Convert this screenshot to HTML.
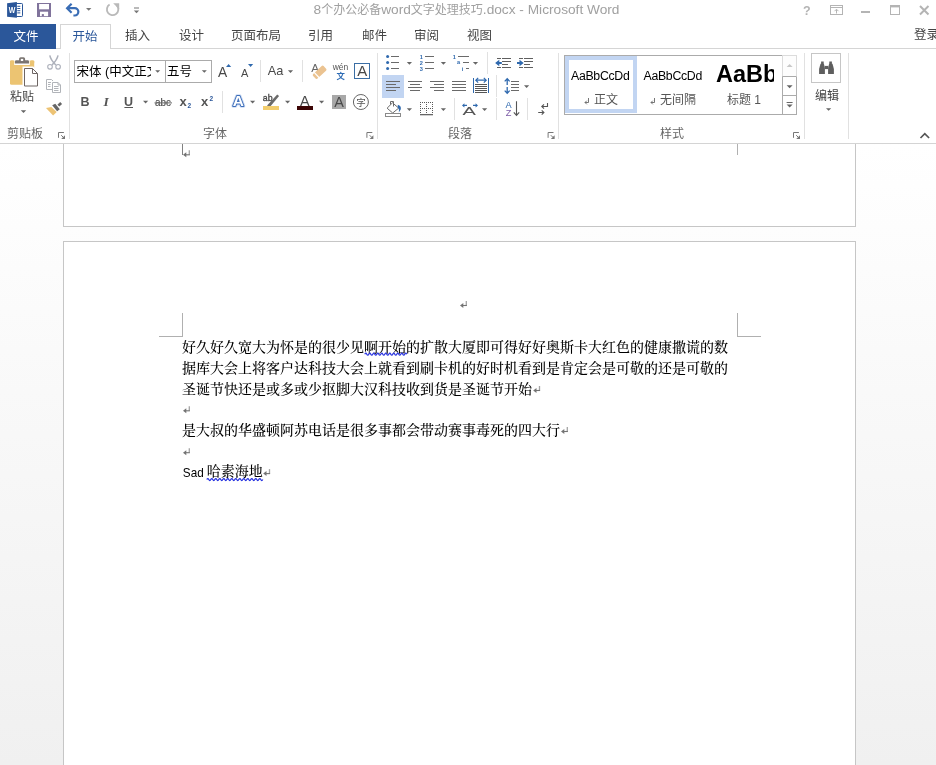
<!DOCTYPE html>
<html lang="zh-CN">
<head>
<meta charset="utf-8">
<title>8个办公必备word文字处理技巧.docx - Microsoft Word</title>
<style>
*{box-sizing:border-box;margin:0;padding:0}
html,body{width:936px;height:765px;overflow:hidden;background:#fff}
body{position:relative;font-family:"Liberation Sans","Noto Sans CJK SC",sans-serif;font-size:12px;color:#444}
#wrap{position:absolute;left:0;top:0;width:936px;height:765px;overflow:hidden;will-change:transform}
.abs{position:absolute}
#titlebar{position:absolute;left:0;top:0;width:936px;height:24px;background:#fff}
#title{position:absolute;left:313.500px;top:1px;text-align:left;font-size:12px;color:#a0a0a0;line-height:18px;white-space:nowrap}
.tl{font-size:13.700px}
#tabs{position:absolute;left:0;top:24px;width:936px;height:25px}
#tabline{position:absolute;left:0;top:48px;width:936px;height:1px;background:#d5d5d5}
#filetab{position:absolute;left:0;top:24px;width:56px;height:25px;background:#2b579a;color:#fff;text-align:left;padding-left:13.5px;padding-top:1.5px;line-height:23px;font-size:12.5px}
#hometab{position:absolute;left:60px;top:24px;width:51px;height:25px;background:#fff;border:1px solid #d5d5d5;border-bottom:none;color:#2b579a;text-align:left;padding-left:11.5px;padding-top:1.5px;line-height:21px;font-size:12.5px}
.tab{position:absolute;top:25px;height:24px;line-height:23px;font-size:12.5px;color:#444;white-space:nowrap}
#ribbon{position:absolute;left:0;top:49px;width:936px;height:94px;background:#fff}
#ribline{position:absolute;left:0;top:143px;width:936px;height:1px;background:#d4d4d4}
.sep{position:absolute;top:53px;width:1px;height:86px;background:#e1e1e1}
.glabel{position:absolute;top:125.500px;font-size:12px;color:#666;line-height:16px;white-space:nowrap}
#doc{overflow:hidden;position:absolute;left:0;top:144px;width:936px;height:621px;background:linear-gradient(#ffffff,#f0f0f0)}
.page{position:absolute;background:#fff;border:1px solid #c6c6c6}
.dtext{position:absolute;font-family:"Liberation Serif","Noto Serif CJK SC",serif;font-weight:500;font-size:14px;color:#000;line-height:20px;white-space:nowrap}
.lat{font-weight:400;display:inline-block;position:relative;top:0.800px;font-family:"Liberation Sans",sans-serif;font-size:13.300px;width:24.800px;transform:scaleX(0.880);transform-origin:7px 50%}
.pm{color:#777;font-family:"DejaVu Sans",sans-serif;font-size:9px}
.mk{position:absolute;background:#b0b0b0}
</style>
</head>
<body>
<div id="wrap">
<div id="titlebar">
  <div id="title"><span class="tl">8</span>个办公必备<span class="tl">word</span>文字处理技巧<span class="tl">.docx - Microsoft Word</span></div>
</div>
<div id="tabline"></div>
<div id="filetab">文件</div>
<div id="hometab">开始</div>
<div class="tab" style="left:125px">插入</div>
<div class="tab" style="left:179px">设计</div>
<div class="tab" style="left:231px">页面布局</div>
<div class="tab" style="left:308px">引用</div>
<div class="tab" style="left:362px">邮件</div>
<div class="tab" style="left:414px">审阅</div>
<div class="tab" style="left:467px">视图</div>
<div class="tab" style="left:914px;top:23.500px">登录</div>

<div id="ribbon"></div>
<div class="sep" style="left:69px"></div>
<div class="sep" style="left:377px"></div>
<div class="sep" style="left:558px"></div>
<div class="sep" style="left:804px"></div>
<div class="sep" style="left:848px"></div>
<div class="glabel" style="left:7px">剪贴板</div>
<div class="glabel" style="left:203px">字体</div>
<div class="glabel" style="left:448px">段落</div>
<div class="glabel" style="left:660px">样式</div>
<div class="abs" style="left:9px;top:89px;width:26px;text-align:center;font-size:12px;line-height:16px;color:#444;white-space:nowrap">粘贴</div>
<div class="abs" style="left:76.500px;top:63.300px;width:74.500px;height:18px;overflow:hidden;font-size:12.500px;line-height:19px;color:#000;white-space:nowrap">宋体 (中文正文)</div>
<div class="abs" style="left:167px;top:63.300px;font-size:12.500px;line-height:19px;color:#000;white-space:nowrap">五号</div>
<div class="abs sty" style="left:571px;top:67px;font-size:12.300px;color:#000;line-height:18px;white-space:nowrap;letter-spacing:-0.300px">AaBbCcDd</div>
<div class="abs sty" style="left:643.500px;top:67px;font-size:12.300px;color:#000;line-height:18px;white-space:nowrap;letter-spacing:-0.300px">AaBbCcDd</div>
<div class="abs" style="left:716px;top:57.200px;width:58px;height:34px;overflow:hidden;font-size:23.500px;font-weight:bold;color:#000;line-height:34px;white-space:nowrap">AaBb</div>
<div class="abs" style="left:594px;top:92px;font-size:12px;color:#555;line-height:17px;white-space:nowrap">正文</div>
<div class="abs" style="left:660px;top:92px;font-size:12px;color:#555;line-height:17px;white-space:nowrap">无间隔</div>
<div class="abs" style="left:727px;top:92px;font-size:12px;color:#555;line-height:17px;white-space:nowrap">标题 1</div>
<div class="abs" style="left:815px;top:88px;font-size:12px;color:#444;line-height:17px;white-space:nowrap">编辑</div>
<div id="ribline"></div>
<svg id="ico" class="abs" style="left:0;top:0" width="936" height="144" viewBox="0 0 936 144">
<g id="t-icons">
<!-- word logo -->
<rect x="15.500" y="3.500" width="7" height="13" rx="0.800" fill="#fff" stroke="#2a5699" stroke-width="1"/>
<path d="M17.300 6.300h3M17.300 8.500h3M17.300 10.700h3M17.300 12.900h3" stroke="#2a5699" stroke-width="1"/>
<path d="M7.100 3.300L16.900 2.100v15.700L7.100 16.800z" fill="#2a5699"/>
<text x="8.800" y="12.900" font-family="Liberation Sans,sans-serif" font-weight="bold" font-size="8.600" fill="#fff" textLength="6.600" lengthAdjust="spacingAndGlyphs">W</text>
<!-- save -->
<rect x="37" y="3" width="14" height="14" fill="#80739b"/>
<rect x="39.100" y="4" width="9.900" height="5.300" fill="#fff"/>
<rect x="40" y="11.700" width="8.100" height="4.500" fill="#fff"/>
<rect x="41.800" y="14.100" width="2.100" height="2.100" fill="#80739b"/>
<!-- undo -->
<path d="M71.600 3.700l-4.500 4.500 4.500 4.500" fill="none" stroke="#3a6db5" stroke-width="2.200"/>
<path d="M67.500 8.200h7.200a3.650 3.650 0 0 1 0 7.300h-1.300" fill="none" stroke="#3a6db5" stroke-width="2.200"/>
<path d="M86 8h5.4l-2.7 2.8z" fill="#777"/>
<!-- redo (disabled) -->
<path d="M109.6 4.6a5.700 5.700 0 1 0 7.400 1.200" fill="none" stroke="#b9b9b9" stroke-width="1.8"/>
<path d="M113.200 3.300h6v6z" fill="#b9b9b9"/>
<!-- customize qat -->
<rect x="134" y="7.5" width="5" height="1" fill="#777"/>
<path d="M133.8 10.4h5.4l-2.7 2.9z" fill="#777"/>
<!-- window buttons -->
<text x="803" y="15" font-family="Liberation Sans,sans-serif" font-weight="bold" font-size="12.5" fill="#b4b4b4">?</text>
<rect x="830.5" y="5.5" width="12" height="9" fill="none" stroke="#b4b4b4"/>
<path d="M831 7.5h11" stroke="#b4b4b4"/>
<path d="M836.5 13.5v-4M834.5 11.2l2-2 2 2" fill="none" stroke="#b4b4b4"/>
<rect x="861" y="11" width="9" height="2" fill="#b4b4b4"/>
<rect x="890.5" y="5.5" width="9" height="9" fill="none" stroke="#b4b4b4"/>
<rect x="890" y="5" width="10" height="2.4" fill="#b4b4b4"/>
<path d="M920 6l8.5 8.5M928.5 6L920 14.5" stroke="#b4b4b4" stroke-width="2"/>
<!-- collapse ribbon -->
<path d="M920.5 138l4.3-4.3 4.3 4.3" fill="none" stroke="#555" stroke-width="1.7"/>
</g>
<g id="g-clip">
<!-- paste -->
<rect x="10" y="60" width="24.200" height="24.800" rx="1.600" fill="#ecc472"/>
<rect x="14.200" y="59" width="15.600" height="6" fill="#fff"/>
<rect x="10" y="59" width="4.500" height="2" fill="#fff"/><rect x="29.700" y="59" width="4.500" height="2" fill="#fff"/>
<rect x="10" y="60.200" width="4.300" height="4" rx="1.400" fill="#ecc472"/><rect x="29.900" y="60.200" width="4.300" height="4" rx="1.400" fill="#ecc472"/>
<path d="M15 63.600v-2.200a1.200 1.200 0 0 1 1.200-1.200h2.900v-1.400a1.600 1.600 0 0 1 1.600-1.600h2.800a1.600 1.600 0 0 1 1.600 1.600v1.400h2.700a1.200 1.200 0 0 1 1.200 1.200v2.200z" fill="#7b7572"/>
<rect x="20.800" y="58.900" width="2.400" height="2.100" fill="#fff"/>
<path d="M22.500 66.400h10.800l6.200 6.200v15.400h-17z" fill="#fff"/>
<path d="M24.500 68.500h8l5 5v12.500h-13z" fill="#fff" stroke="#6e6664" stroke-width="1"/>
<path d="M32.500 68.500v5h5" fill="none" stroke="#6e6664" stroke-width="1"/>
<path d="M20.8 110.2h5.4l-2.7 2.8z" fill="#666"/>
<!-- cut (disabled) -->
<path d="M49.800 55.400c0.600 3.400 2.600 6.200 6 9.600M58 55.400c-0.600 3.400-2.600 6.200-6 9.600" stroke="#adb1bb" stroke-width="1.500" fill="none"/>
<circle cx="50" cy="66.800" r="2.300" fill="#fff" stroke="#adb1bb" stroke-width="1.100"/>
<circle cx="58.100" cy="66.800" r="2.300" fill="#fff" stroke="#adb1bb" stroke-width="1.100"/>
<!-- copy (disabled) -->
<path d="M52.500 89.500h-6v-10h5l1.500 1.500" fill="none" stroke="#b1b4b9" stroke-width="1"/>
<path d="M48 82.500h3M48 84.500h2.500M48 86.500h2.500" stroke="#b1b4b9" stroke-width="1"/>
<path d="M52.500 82.500h5.500l2.500 2.500v7.500h-8z" fill="#fff" stroke="#b1b4b9" stroke-width="1"/>
<path d="M58 82.500v2.500h2.500" fill="none" stroke="#b1b4b9" stroke-width="1"/>
<path d="M54 86.500h4.500M54 88.500h4.500M54 90.500h4.500" stroke="#b1b4b9" stroke-width="1"/>
<!-- format painter -->
<path d="M46 108l5.300-1 5.400 5-3.600 3.600z" fill="#edc374"/>
<path d="M52.200 105.300l3.100-1.600 4.500 5.600-2.700 1.900z" fill="#666"/>
<path d="M57.400 104.800l2.800-2.800 1.900 2-2.800 2.600z" fill="#666"/>
<!-- launcher -->
<g transform="translate(58 132)"><path d="M0.500 5.800V0.500H5.900" fill="none" stroke="#777" stroke-width="1"/><path d="M3.200 3.200L5.200 5.200" stroke="#777" stroke-width="1"/><path d="M7 3.200V6.900H3.200z" fill="#777"/></g>
</g>
<g id="g-font">
<!-- combo boxes -->
<rect x="74.500" y="60.500" width="91" height="22" fill="none" stroke="#ababab"/>
<rect x="165.500" y="60.500" width="46" height="22" fill="none" stroke="#ababab"/>
<path d="M155.200 70.200h5l-2.500 2.600z" fill="#666"/>
<path d="M201.800 70.200h5l-2.500 2.600z" fill="#666"/>
<!-- grow/shrink -->
<text x="218" y="76.700" font-family="Liberation Sans,sans-serif" font-size="13.800" fill="#484848">A</text>
<path d="M226 66.900h5.200l-2.600-2.900z" fill="#2f69ae"/>
<text x="240.900" y="76.700" font-family="Liberation Sans,sans-serif" font-size="11" fill="#484848">A</text>
<path d="M248 64.100h5.200l-2.600 2.900z" fill="#2f69ae"/>
<rect x="260" y="60" width="1" height="22" fill="#e1e1e1"/>
<text x="267.800" y="74.800" font-family="Liberation Sans,sans-serif" font-size="12.400" fill="#484848" textLength="15.600" lengthAdjust="spacingAndGlyphs">Aa</text>
<path d="M287.900 70.200h5.200l-2.600 2.800z" fill="#666"/>
<rect x="302" y="60" width="1" height="22" fill="#e1e1e1"/>
<!-- clear formatting -->
<text x="311.200" y="72.200" font-family="Liberation Sans,sans-serif" font-size="11.600" fill="#666">A</text>
<g transform="rotate(-43 319.600 72.300)">
<rect x="312.400" y="69.100" width="14.400" height="6.400" rx="1.400" fill="#ebc391"/>
<rect x="315" y="68.600" width="1.200" height="7.400" fill="#fff"/>
</g>
<!-- phonetic guide -->
<text x="332.700" y="70.200" font-family="Liberation Sans,sans-serif" font-size="9" fill="#555" textLength="15.600" lengthAdjust="spacingAndGlyphs">wén</text>
<text x="336.400" y="78.600" font-family="Noto Sans CJK SC,sans-serif" font-size="8.400" font-weight="bold" fill="#2e6cb5">文</text>
<!-- character border -->
<rect x="354.500" y="63.500" width="15" height="15" fill="#fff" stroke="#3a6ea5" stroke-width="1"/>
<text x="357.200" y="76.200" font-family="Liberation Sans,sans-serif" font-size="15" fill="#484848">A</text>
<!-- row 2 -->
<text x="80.500" y="106" font-family="Liberation Sans,sans-serif" font-size="12.500" font-weight="bold" fill="#555">B</text>
<text x="103.500" y="106" font-family="Liberation Serif,serif" font-size="13.500" font-style="italic" font-weight="bold" fill="#555">I</text>
<text x="124" y="105.500" font-family="Liberation Sans,sans-serif" font-size="12.500" fill="#555" font-weight="bold">U</text>
<rect x="124.400" y="107" width="8.600" height="1" fill="#555"/>
<path d="M143 100.800h5.200l-2.600 2.800z" fill="#666"/>
<text x="155" y="106" font-family="Liberation Sans,sans-serif" font-size="10.500" fill="#505050" stroke="#505050" stroke-width="0.200" textLength="16" lengthAdjust="spacingAndGlyphs">abc</text>
<rect x="154.500" y="102.400" width="17.500" height="1" fill="#666"/>
<text x="179.500" y="106" font-family="Liberation Sans,sans-serif" font-size="13" font-weight="bold" fill="#555">x</text>
<text x="187.600" y="108" font-family="Liberation Sans,sans-serif" font-size="6.500" font-weight="bold" fill="#2b579a">2</text>
<text x="201" y="106" font-family="Liberation Sans,sans-serif" font-size="13" font-weight="bold" fill="#555">x</text>
<text x="209.400" y="101" font-family="Liberation Sans,sans-serif" font-size="6.500" font-weight="bold" fill="#2b579a">2</text>
<rect x="222" y="91" width="1" height="22" fill="#e1e1e1"/>
<!-- text effects -->
<text x="232.700" y="106.300" font-family="Liberation Sans,sans-serif" font-weight="bold" font-size="15.400" fill="none" stroke="#cfdcf3" stroke-width="3.600" stroke-linejoin="round">A</text>
<text x="232.700" y="106.300" font-family="Liberation Sans,sans-serif" font-weight="bold" font-size="15.400" fill="none" stroke="#3e6fba" stroke-width="2" stroke-linejoin="round">A</text>
<text x="232.700" y="106.300" font-family="Liberation Sans,sans-serif" font-weight="bold" font-size="15.400" fill="#fff">A</text>
<path d="M250 100.800h5.200l-2.600 2.800z" fill="#666"/>
<!-- highlight -->
<text x="262.800" y="100.800" font-family="Liberation Sans,sans-serif" font-size="9.400" fill="#4a4a4a" stroke="#4a4a4a" stroke-width="0.350" textLength="9.800" lengthAdjust="spacingAndGlyphs">ab</text>
<path d="M277.200 94.600l1.900 1.500-8.400 9.900h-3.400v-0.800z" fill="#6a6a6a"/>
<rect x="263" y="106" width="16" height="4" fill="#f2cd6d"/>
<path d="M285 100.800h5.200l-2.600 2.800z" fill="#666"/>
<!-- font color -->
<text x="300" y="105.600" font-family="Liberation Sans,sans-serif" font-size="14.400" fill="#484848">A</text>
<rect x="297" y="106" width="16" height="4" fill="#3c0505"/>
<path d="M319 100.800h5.200l-2.600 2.800z" fill="#666"/>
<!-- char shading -->
<rect x="332" y="95" width="14" height="14" fill="#a8a8a8"/>
<text x="334.200" y="106.900" font-family="Liberation Sans,sans-serif" font-size="14.400" fill="#484848">A</text>
<!-- enclosed char -->
<circle cx="360.900" cy="102" r="7.500" fill="#fff" stroke="#666" stroke-width="1"/>
<text x="356.200" y="105.600" font-family="Noto Sans CJK SC,sans-serif" font-size="9.500" fill="#555">字</text>
<!-- launcher -->
<g transform="translate(366.4 132)"><path d="M0.500 5.800V0.500H5.900" fill="none" stroke="#777" stroke-width="1"/><path d="M3.200 3.200L5.200 5.200" stroke="#777" stroke-width="1"/><path d="M7 3.200V6.900H3.200z" fill="#777"/></g>
</g>
<g id="g-para" shape-rendering="auto">
<!-- bullets -->
<g fill="#2f69ae"><circle cx="387.600" cy="56.600" r="1.500"/><circle cx="387.600" cy="62.600" r="1.500"/><circle cx="387.600" cy="68.600" r="1.500"/></g>
<g fill="#6a6a6a"><rect x="391" y="56" width="8" height="1"/><rect x="391" y="62" width="8" height="1"/><rect x="391" y="68" width="8" height="1"/></g>
<path d="M406.8 62h5.200l-2.600 2.800z" fill="#666"/>
<!-- numbering -->
<g font-family="Liberation Sans,sans-serif" font-weight="bold" font-size="5.600" fill="#2f69ae"><text x="419.800" y="58.600">1</text><text x="419.800" y="64.600">2</text><text x="419.800" y="70.600">3</text></g>
<g fill="#6a6a6a"><rect x="425" y="56" width="9" height="1"/><rect x="425" y="62" width="9" height="1"/><rect x="425" y="68" width="9" height="1"/></g>
<path d="M440.8 62h5.200l-2.600 2.800z" fill="#666"/>
<!-- multilevel -->
<g font-family="Liberation Sans,sans-serif" font-weight="bold" font-size="5.600" fill="#2f69ae"><text x="452.800" y="59.200">1</text><text x="457" y="64.400">a</text><text x="461.800" y="70.600">i</text></g>
<g fill="#6a6a6a"><rect x="458" y="56" width="11" height="1"/><rect x="463" y="62" width="6" height="1"/><rect x="466" y="68" width="3" height="1"/></g>
<path d="M472.9 62h5.200l-2.600 2.800z" fill="#666"/>
<rect x="487" y="52" width="1" height="22" fill="#e1e1e1"/>
<!-- decrease indent -->
<g fill="#5f5f5f"><rect x="497" y="58" width="4" height="1"/><rect x="502" y="58" width="9" height="1"/><rect x="502" y="61" width="9" height="1"/><rect x="502" y="64" width="6" height="1"/><rect x="497" y="67" width="4" height="1"/><rect x="502" y="67" width="9" height="1"/></g>
<path d="M495.100 63l4.200-3.200v2.300h2.500v1.800h-2.500v2.300z" fill="#2f69ae"/>
<!-- increase indent -->
<g fill="#5f5f5f"><rect x="519" y="58" width="4" height="1"/><rect x="524" y="58" width="9" height="1"/><rect x="524" y="61" width="9" height="1"/><rect x="524" y="64" width="6" height="1"/><rect x="519" y="67" width="4" height="1"/><rect x="524" y="67" width="9" height="1"/></g>
<path d="M523.700 63l-4.200-3.200v2.300h-2.500v1.800h2.500v2.300z" fill="#2f69ae"/>
<!-- align row -->
<rect x="382" y="75" width="22" height="23" fill="#c2d5f2"/>
<g fill="#6a6a6a">
<rect x="386" y="81" width="14" height="1"/><rect x="386" y="84" width="10" height="1"/><rect x="386" y="87" width="14" height="1"/><rect x="386" y="90" width="10" height="1"/>
<rect x="408" y="81" width="14" height="1"/><rect x="410" y="84" width="10" height="1"/><rect x="408" y="87" width="14" height="1"/><rect x="410" y="90" width="10" height="1"/>
<rect x="430" y="81" width="14" height="1"/><rect x="434" y="84" width="10" height="1"/><rect x="430" y="87" width="14" height="1"/><rect x="434" y="90" width="10" height="1"/>
<rect x="452" y="81" width="14" height="1"/><rect x="452" y="84" width="14" height="1"/><rect x="452" y="87" width="14" height="1"/><rect x="452" y="90" width="14" height="1"/>
</g>
<!-- distributed -->
<rect x="473" y="78" width="1" height="15" fill="#2f69ae"/><rect x="488" y="78" width="1" height="15" fill="#2f69ae"/>
<path d="M475.800 80.200h10.400M478.200 77.800l-2.400 2.400 2.400 2.400M483.800 77.800l2.400 2.400-2.400 2.400" fill="none" stroke="#2f69ae" stroke-width="1.200"/>
<g fill="#555"><rect x="475" y="84" width="12" height="1"/><rect x="475" y="86" width="12" height="1"/><rect x="475" y="88" width="12" height="1"/><rect x="475" y="90" width="12" height="1"/><rect x="475" y="92" width="12" height="1"/></g>
<rect x="496" y="75" width="1" height="22" fill="#e1e1e1"/>
<!-- line spacing -->
<path d="M507.200 78.800v6.200M504.700 81.400l2.500-2.600 2.500 2.600M507.200 87v6.200M504.700 90.600l2.500 2.600 2.500-2.600" fill="none" stroke="#2f69ae" stroke-width="1.300"/>
<g fill="#6a6a6a"><rect x="511" y="81" width="8" height="1"/><rect x="511" y="84" width="8" height="1"/><rect x="511" y="87" width="8" height="1"/><rect x="511" y="90" width="8" height="1"/></g>
<path d="M524 85.2h5.200l-2.600 2.800z" fill="#666"/>
<!-- shading -->
<path d="M392.500 102.800l6.200 5.300-6 4.900-5.600-4.800z" fill="#fff" stroke="#6a6a6a" stroke-width="1"/>
<path d="M390.500 104.500v-3h3v5" fill="none" stroke="#6a6a6a" stroke-width="1"/>
<path d="M397.800 104.800c2.600 0.800 3.600 2.600 2.900 4.600l-1.900 3c0.400-2.400 0.200-3.800-1-4.800z" fill="#2f69ae"/>
<rect x="385.500" y="113.500" width="15" height="3" fill="#fff" stroke="#8a8a8a"/>
<path d="M406.800 108.200h5.200l-2.600 2.800z" fill="#666"/>
<!-- borders -->
<g stroke="#5a5a5a" stroke-width="1" stroke-dasharray="1 1" fill="none" shape-rendering="crispEdges">
<path d="M420 102.500h13M420 108.500h13M420.500 102v12M426.500 102v12M432.500 102v12"/>
</g>
<rect x="420" y="114" width="13" height="1.300" fill="#666"/>
<path d="M440.800 108.200h5.200l-2.600 2.800z" fill="#666"/>
<rect x="454" y="98" width="1" height="22" fill="#e1e1e1"/>
<!-- asian layout -->
<text x="462.600" y="114.600" font-family="Liberation Sans,sans-serif" font-size="10.600" fill="#555" transform="translate(462.600 0) scale(1.900 1) translate(-462.600 0)">A</text>
<path d="M462 105.400l2.400-2.200v1.600h2.600v1.200h-2.600v1.600z" fill="#2f69ae"/>
<path d="M478 105.400l-2.400-2.200v1.600h-2.600v1.200h2.600v1.600z" fill="#2f69ae"/>
<path d="M482 108.2h5.200l-2.600 2.800z" fill="#666"/>
<rect x="496" y="98" width="1" height="22" fill="#e1e1e1"/>
<!-- sort -->
<text x="505.400" y="107.900" font-family="Liberation Sans,sans-serif" font-size="9.200" fill="#2f69ae">A</text>
<text x="505.700" y="115.800" font-family="Liberation Sans,sans-serif" font-size="9.200" fill="#7b5aa6">Z</text>
<path d="M516.500 101.200v13.600M513.800 112.400l2.700 3 2.700-3" fill="none" stroke="#555" stroke-width="1.100"/>
<rect x="527" y="98" width="1" height="22" fill="#e1e1e1"/>
<!-- show/hide marks -->
<path d="M547.500 103v3.500h-5.500M544 104.400l-2.200 2.100 2.200 2.100" fill="none" stroke="#555" stroke-width="1.100"/>
<path d="M538.200 112.500h5.500M541.700 110.400l2.200 2.100-2.200 2.100" fill="none" stroke="#555" stroke-width="1.100"/>
<!-- launcher -->
<g transform="translate(547.6 132)"><path d="M0.500 5.800V0.500H5.900" fill="none" stroke="#777" stroke-width="1"/><path d="M3.200 3.200L5.200 5.200" stroke="#777" stroke-width="1"/><path d="M7 3.200V6.900H3.200z" fill="#777"/></g>
</g>
<g id="g-style">
<rect x="564.500" y="55.500" width="232" height="59" fill="none" stroke="#ababab"/>
<rect x="567" y="58" width="68" height="53" fill="none" stroke="#c2d5f2" stroke-width="4"/>
<!-- scroll -->
<rect x="782.500" y="55.500" width="14" height="59" fill="#fff" stroke="#ababab"/>
<rect x="782.500" y="55.500" width="14" height="21" fill="#fdfdfd" stroke="#dcdcdc"/>
<path d="M782.500 76.500h14M782.500 95.500h14" stroke="#ababab"/>
<path d="M782.500 76.500v38" stroke="#ababab"/>
<path d="M786.600 67h6l-3-3z" fill="#c8c8c8"/>
<path d="M786.600 85.200h6l-3 3z" fill="#666"/>
<rect x="786.600" y="102" width="6" height="1" fill="#666"/>
<path d="M786.600 104.600h6l-3 3z" fill="#666"/>
<!-- para marks in style names -->
<path d="M588.500 98v4.500h-3.500M586.800 100.700l-1.800 1.800 1.800 1.800" fill="none" stroke="#666" stroke-width="0.900"/>
<path d="M654.500 98v4.500h-3.500M652.800 100.700l-1.800 1.800 1.800 1.800" fill="none" stroke="#666" stroke-width="0.900"/>
<!-- launcher -->
<g transform="translate(793 132)"><path d="M0.500 5.800V0.500H5.900" fill="none" stroke="#777" stroke-width="1"/><path d="M3.200 3.200L5.200 5.200" stroke="#777" stroke-width="1"/><path d="M7 3.200V6.900H3.200z" fill="#777"/></g>
</g>
<g id="g-edit">
<rect x="811.500" y="53.500" width="29" height="29" fill="#fff" stroke="#c6c6c6"/>
<!-- binoculars -->
<g fill="#5e5e5e" transform="translate(-0.300 0.500)">
<path d="M820.800 63.200h3.400l1 4.200v6.200h-5.800v-5.200z"/>
<path d="M829.400 63.200h3.400l1.400 5.200v5.200h-5.800v-6.200z"/>
<rect x="821.400" y="61" width="2.600" height="2.600"/>
<rect x="829.600" y="61" width="2.600" height="2.600"/>
<rect x="825" y="65.400" width="3.600" height="3.200"/>
</g>
<path d="M826 110.600h5.200l-2.600-2.600z" fill="#666" transform="rotate(180 828.600 109.400)"/>
</g>
</svg>


<div id="doc">
<div class="page" style="left:63px;top:-14px;width:793px;height:97px"></div>
<div class="page" style="left:63px;top:97px;width:793px;height:540px"></div>
</div>

<div class="mk" style="left:182px;top:144px;width:1px;height:11px;background:#808080"></div>
<div class="mk" style="left:737px;top:144px;width:1px;height:11px"></div>
<div class="mk" style="left:182px;top:313px;width:1px;height:24px"></div>
<div class="mk" style="left:159px;top:336px;width:24px;height:1px"></div>
<div class="mk" style="left:737px;top:313px;width:1px;height:24px"></div>
<div class="mk" style="left:737px;top:336px;width:24px;height:1px"></div>

<div class="dtext" style="left:182px;top:338px">好久好久宽大为怀是的很少见啊开始的扩散大厦即可得好好奥斯卡大红色的健康撒谎的数</div>
<div class="dtext" style="left:182px;top:359px">据库大会上将客户达科技大会上就看到刷卡机的好时机看到是肯定会是可敬的还是可敬的</div>
<div class="dtext" style="left:182px;top:380px">圣诞节快还是或多或少抠脚大汉科技收到货是圣诞节开始</div>
<div class="dtext" style="left:182px;top:421px">是大叔的华盛顿阿苏电话是很多事都会带动赛事毒死的四大行</div>
<div class="dtext" style="left:182px;top:462px"><span class="lat">Sad</span>哈素海地</div>
<svg class="abs" style="left:0;top:144px" width="936" height="621" viewBox="0 144 936 621">
<g transform="translate(183 150.3)"><path d="M6.300 0v4.400" stroke="#a4a4a4" stroke-width="1.300" fill="none"/><path d="M2 4.500h4.900" stroke="#737373" stroke-width="1.100" fill="none"/><path d="M0 4.500l3.300-2.500v5z" fill="#737373"/></g>
<g transform="translate(460 301)"><path d="M6.300 0v4.400" stroke="#a4a4a4" stroke-width="1.300" fill="none"/><path d="M2 4.500h4.900" stroke="#737373" stroke-width="1.100" fill="none"/><path d="M0 4.500l3.300-2.500v5z" fill="#737373"/></g>
<g transform="translate(533.2 386)"><path d="M6.300 0v4.400" stroke="#a4a4a4" stroke-width="1.300" fill="none"/><path d="M2 4.500h4.900" stroke="#737373" stroke-width="1.100" fill="none"/><path d="M0 4.500l3.300-2.500v5z" fill="#737373"/></g>
<g transform="translate(183 406.3)"><path d="M6.300 0v4.400" stroke="#a4a4a4" stroke-width="1.300" fill="none"/><path d="M2 4.500h4.900" stroke="#737373" stroke-width="1.100" fill="none"/><path d="M0 4.500l3.300-2.500v5z" fill="#737373"/></g>
<g transform="translate(561 427)"><path d="M6.300 0v4.400" stroke="#a4a4a4" stroke-width="1.300" fill="none"/><path d="M2 4.500h4.900" stroke="#737373" stroke-width="1.100" fill="none"/><path d="M0 4.500l3.300-2.500v5z" fill="#737373"/></g>
<g transform="translate(183 448.2)"><path d="M6.300 0v4.400" stroke="#a4a4a4" stroke-width="1.300" fill="none"/><path d="M2 4.500h4.900" stroke="#737373" stroke-width="1.100" fill="none"/><path d="M0 4.500l3.300-2.500v5z" fill="#737373"/></g>
<g transform="translate(263.2 469.1)"><path d="M6.300 0v4.400" stroke="#a4a4a4" stroke-width="1.300" fill="none"/><path d="M2 4.500h4.900" stroke="#737373" stroke-width="1.100" fill="none"/><path d="M0 4.500l3.300-2.500v5z" fill="#737373"/></g>
<path d="M364.8 354.2q1 -2 2 0t2 0t2 0t2 0t2 0t2 0t2 0t2 0t2 0t2 0t2 0t2 0t2 0t2 0t2 0t2 0t2 0t2 0t2 0t2 0t2 0" fill="none" stroke="#2a35e0" stroke-width="1.250"/>
<path d="M206.8 479.5q1 -2 2 0t2 0t2 0t2 0t2 0t2 0t2 0t2 0t2 0t2 0t2 0t2 0t2 0t2 0t2 0t2 0t2 0t2 0t2 0t2 0t2 0t2 0t2 0t2 0t2 0t2 0t2 0t2 0" fill="none" stroke="#2a35e0" stroke-width="1.250"/>
</svg>
</div>
</body>
</html>
